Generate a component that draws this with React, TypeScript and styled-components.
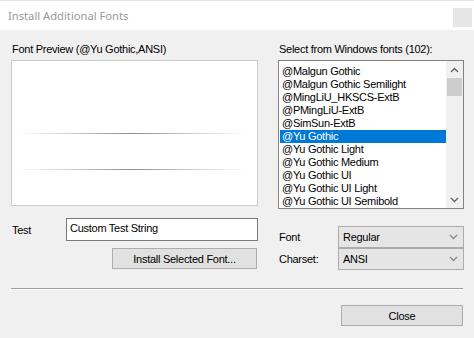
import * as React from "react"
import styled, { createGlobalStyle } from "styled-components"

const GlobalStyle = createGlobalStyle`
  html, body {
    margin: 0;
    padding: 0;
    background: #f0f0f0;
  }
  body {
    font-family: "Liberation Sans", Arial, sans-serif;
    font-size: 11px;
    letter-spacing: -0.27px;
    color: #000;
  }
  * {
    box-sizing: border-box;
  }
`

const Window = styled.div`
  width: 474px;
  height: 338px;
  display: flex;
  flex-direction: column;
  background: #f0f0f0;
  overflow: hidden;
`

const TitleBar = styled.div`
  height: 30px;
  flex: none;
  background: #fff;
  border-top: 1px solid #e3e3e3;
  display: flex;
  justify-content: space-between;
  padding-left: 8px;
  padding-right: 2px;
`

const Title = styled.span`
  font-family: "Noto Sans", "Open Sans", sans-serif;
  font-size: 11.2px;
  letter-spacing: 0;
  line-height: 29px;
  color: #999;
`

const CloseBox = styled.div`
  width: 19px;
  height: 19px;
  margin-top: 7px;
  background: #e6e6e6;
`

const Body = styled.div`
  flex: 1;
  display: flex;
  flex-direction: column;
  padding: 13px 10px 0 11px;
`

const Columns = styled.div`
  display: flex;
  gap: 20px;
`

const Column = styled.div<{ $width: number }>`
  width: ${(p) => p.$width}px;
  display: flex;
  flex-direction: column;
`

const Label = styled.div`
  line-height: 13px;
  height: 13px;
  padding-left: 1px;
  margin-bottom: 4px;
  white-space: nowrap;
`

const Preview = styled.div`
  height: 146px;
  background: #fff;
  border: 1px solid #cbcbcb;
  display: flex;
`

const Row = styled.div<{ $top: number }>`
  display: flex;
  align-items: center;
  margin-top: ${(p) => p.$top}px;
`

const RowLabel = styled.div<{ $width: number }>`
  width: ${(p) => p.$width}px;
  padding-left: 1px;
  flex: none;
`

const TextInput = styled.div`
  flex: 1;
  height: 23px;
  background: #fff;
  border: 1px solid #7a7a7a;
  padding-left: 3px;
  line-height: 19px;
`

const Button = styled.div<{ $width: number; $top: number }>`
  align-self: flex-end;
  width: ${(p) => p.$width}px;
  height: 21px;
  margin-top: ${(p) => p.$top}px;
  margin-right: 1px;
  background: #e1e1e1;
  border: 1px solid #adadad;
  display: flex;
  align-items: center;
  justify-content: center;
`

const ListBox = styled.div`
  height: 149px;
  background: #fff;
  border: 1px solid #828282;
  display: flex;
  overflow: hidden;
`

const Items = styled.div`
  flex: 1;
  padding: 4px 0 0 1px;
  overflow: hidden;
`

const Item = styled.div<{ $selected?: boolean }>`
  height: 13px;
  line-height: 13px;
  padding-left: 2px;
  white-space: nowrap;
  background: ${(p) => (p.$selected ? "#0078d7" : "transparent")};
  color: ${(p) => (p.$selected ? "#fff" : "#000")};
`

const ScrollBar = styled.div`
  width: 17px;
  flex: none;
  background: #f0f0f0;
  display: flex;
  flex-direction: column;
  align-items: center;
`

const ScrollArrow = styled.div`
  height: 17px;
  flex: none;
  display: flex;
  align-items: center;
  justify-content: center;
`

const Thumb = styled.div`
  width: 15px;
  height: 18px;
  background: #cdcdcd;
`

const Track = styled.div`
  flex: 1;
`

const Combo = styled.div`
  flex: 1;
  height: 22px;
  background: #e5e5e5;
  border: 1px solid #acacac;
  display: flex;
  align-items: center;
  justify-content: space-between;
  padding: 0 5px 0 4px;
`

const Separator = styled.div`
  height: 2px;
  margin-top: 18px;
  border-top: 1px solid #a0a0a0;
  border-bottom: 1px solid #fff;
  margin-right: 1px;
`

const Footer = styled.div`
  display: flex;
  justify-content: flex-end;
`

const Chevron = ({ up, color = "#606060" }: { up?: boolean; color?: string }) => (
  <svg width="9" height="6" viewBox="0 0 9 6">
    <polyline
      points={up ? "1,5 4.5,1.5 8,5" : "1,1 4.5,4.5 8,1"}
      fill="none"
      stroke={color}
      strokeWidth="1.3"
    />
  </svg>
)

const PreviewLines = () => (
  <svg width="245" height="144" viewBox="0 0 245 144">
    <defs>
      <linearGradient id="line" x1="0" x2="1" y1="0" y2="0">
        <stop offset="0" stopColor="#a0a0a0" stopOpacity="0" />
        <stop offset="0.5" stopColor="#8c8c8c" stopOpacity="1" />
        <stop offset="1" stopColor="#a0a0a0" stopOpacity="0" />
      </linearGradient>
    </defs>
    <rect x="4" y="72" width="232" height="1" fill="url(#line)" />
    <rect x="4" y="108" width="232" height="1" fill="url(#line)" />
  </svg>
)

const fonts = [
  "@Malgun Gothic",
  "@Malgun Gothic Semilight",
  "@MingLiU_HKSCS-ExtB",
  "@PMingLiU-ExtB",
  "@SimSun-ExtB",
  "@Yu Gothic",
  "@Yu Gothic Light",
  "@Yu Gothic Medium",
  "@Yu Gothic UI",
  "@Yu Gothic UI Light",
  "@Yu Gothic UI Semibold",
]

export default function App() {
  return (
    <Window>
      <GlobalStyle />
      <TitleBar>
        <Title>Install Additional Fonts</Title>
        <CloseBox />
      </TitleBar>
      <Body>
        <Columns>
          <Column $width={247}>
            <Label>Font Preview (@Yu Gothic,ANSI)</Label>
            <Preview>
              <PreviewLines />
            </Preview>
            <Row $top={12}>
              <RowLabel $width={55}>Test</RowLabel>
              <TextInput>Custom Test String</TextInput>
            </Row>
            <Button $width={145} $top={7}>
              Install Selected Font...
            </Button>
          </Column>
          <Column $width={186}>
            <Label>Select from Windows fonts (102):</Label>
            <ListBox>
              <Items>
                {fonts.map((f) => (
                  <Item key={f} $selected={f === "@Yu Gothic"}>
                    {f}
                  </Item>
                ))}
              </Items>
              <ScrollBar>
                <ScrollArrow>
                  <Chevron up />
                </ScrollArrow>
                <Thumb />
                <Track />
                <ScrollArrow>
                  <Chevron />
                </ScrollArrow>
              </ScrollBar>
            </ListBox>
            <Row $top={17}>
              <RowLabel $width={60}>Font</RowLabel>
              <Combo>
                <span>Regular</span>
                <Chevron color="#888" />
              </Combo>
            </Row>
            <Row $top={0}>
              <RowLabel $width={60}>Charset:</RowLabel>
              <Combo>
                <span>ANSI</span>
                <Chevron color="#888" />
              </Combo>
            </Row>
          </Column>
        </Columns>
        <Separator />
        <Footer>
          <Button $width={122} $top={15}>
            Close
          </Button>
        </Footer>
      </Body>
    </Window>
  )
}
